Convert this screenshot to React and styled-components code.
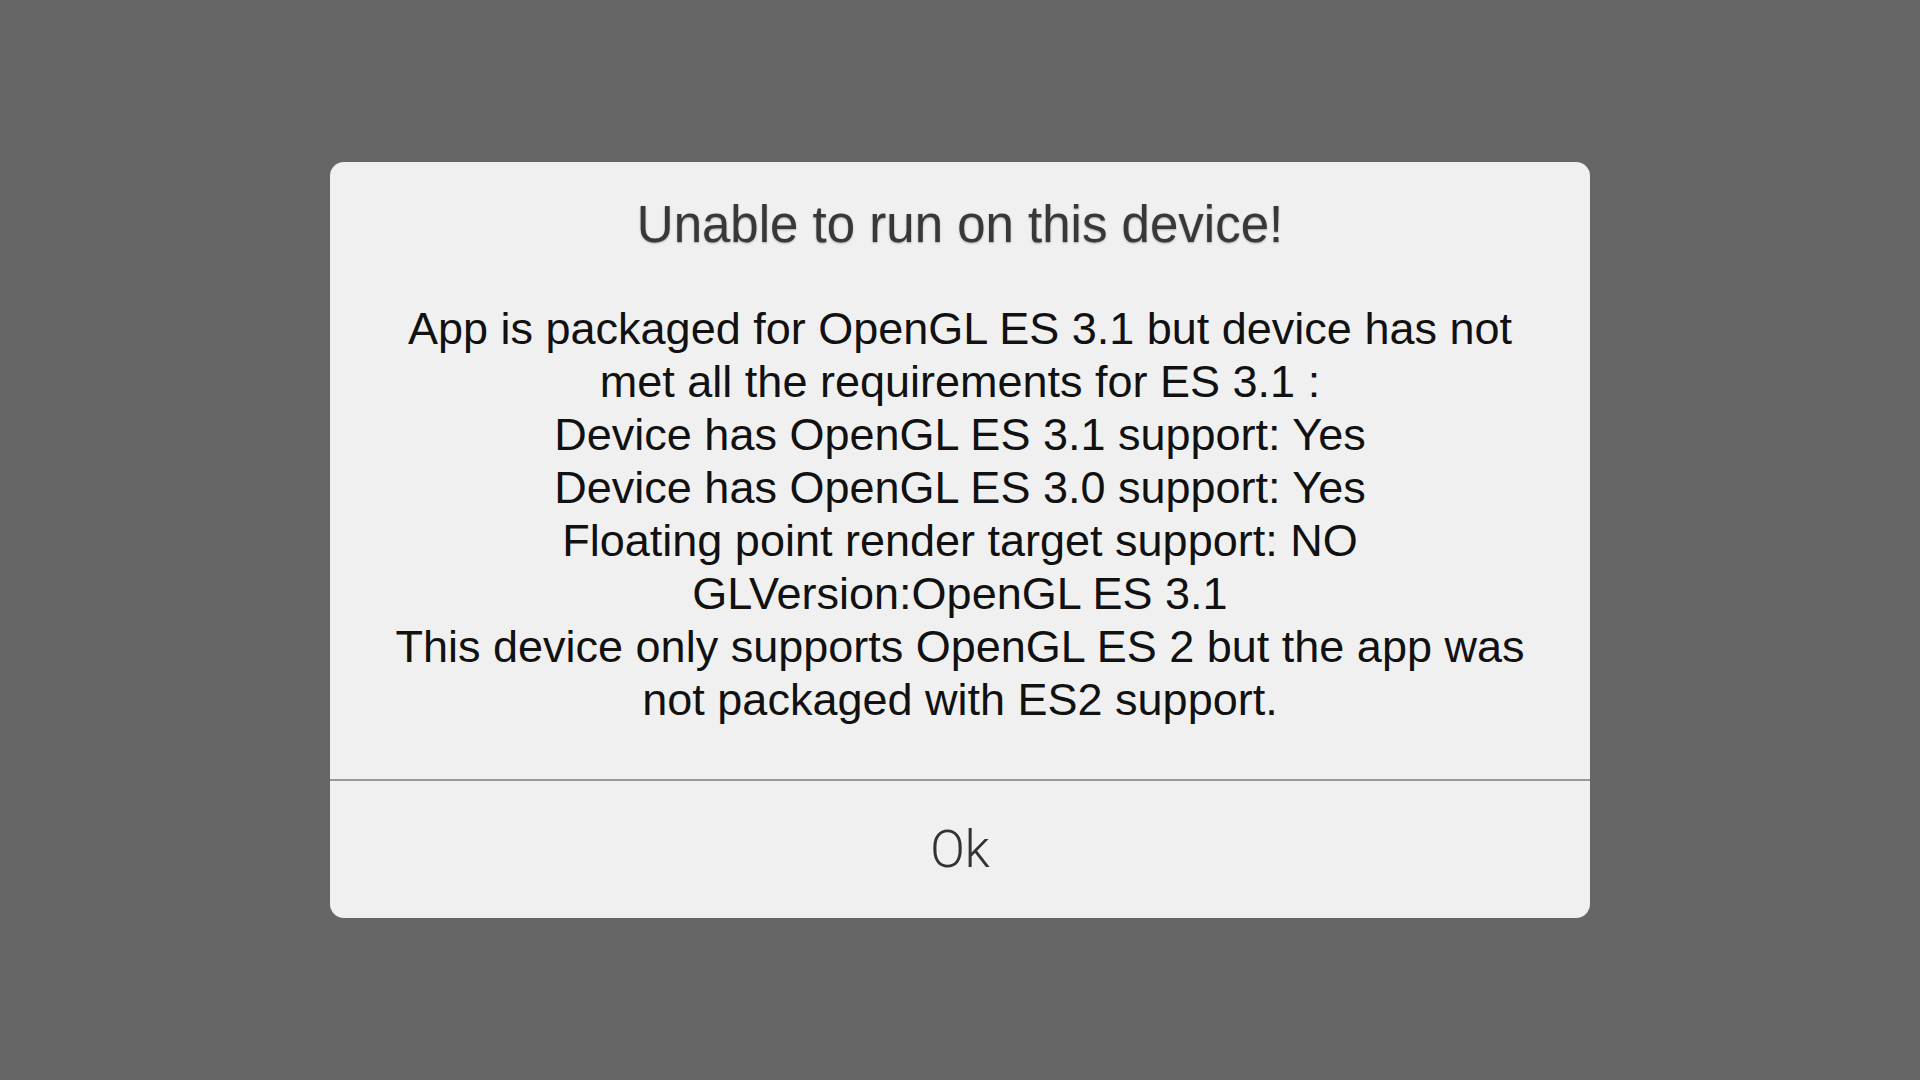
import React from "react";
import styled, { createGlobalStyle } from "styled-components";

const GlobalStyle = createGlobalStyle`
  html, body {
    margin: 0;
    padding: 0;
    height: 100%;
    background: #666666;
  }
  #root {
    height: 100%;
  }
`;

const lines = [
  "App is packaged for OpenGL ES 3.1 but device has not",
  "met all the requirements for ES 3.1 :",
  "Device has OpenGL ES 3.1 support: Yes",
  "Device has OpenGL ES 3.0 support: Yes",
  "Floating point render target support: NO",
  "GLVersion:OpenGL ES 3.1",
  "This device only supports OpenGL ES 2 but the app was",
  "not packaged with ES2 support.",
];

function App() {
  return (
    <>
      <GlobalStyle />
      <Backdrop>
        <Dialog role="dialog">
          <Content>
            <Title>Unable to run on this device!</Title>
            <Message>
              {lines.map((line, i) => (
                <Line key={i}>{line}</Line>
              ))}
            </Message>
          </Content>
          <Divider />
          <OkButton>Ok</OkButton>
        </Dialog>
      </Backdrop>
    </>
  );
}

const Backdrop = styled.div`
  width: 100vw;
  height: 100vh;
  display: flex;
  justify-content: center;
  align-items: center;
  background: #666666;
  font-family: "Liberation Sans", Arial, sans-serif;
`;

const Dialog = styled.div`
  width: 1260px;
  height: 756px;
  background: #f0f0f0;
  border-radius: 14px;
  display: flex;
  flex-direction: column;
  overflow: hidden;
`;

const Content = styled.div`
  padding-top: 33px;
  height: 617px;
  box-sizing: border-box;
  display: flex;
  flex-direction: column;
  align-items: center;
`;

const Title = styled.div`
  font-size: 51px;
  line-height: 60px;
  color: #383838;
  text-shadow: 0 1px 2px rgba(0, 0, 0, 0.3);
  text-align: center;
`;

const Message = styled.div`
  margin-top: 47px;
  display: flex;
  flex-direction: column;
  align-items: center;
`;

const Line = styled.div`
  font-size: 45px;
  line-height: 53px;
  color: #111111;
  text-align: center;
  white-space: nowrap;
`;

const Divider = styled.div`
  height: 2px;
  background: #9a9a9a;
  flex-shrink: 0;
`;

const OkButton = styled.button`
  flex: 1;
  border: none;
  background: transparent;
  font-family: Roboto, "Liberation Sans", sans-serif;
  font-weight: 300;
  font-size: 51px;
  color: #333333;
  padding: 0;
  cursor: pointer;
  display: flex;
  justify-content: center;
  align-items: center;
`;

export default App;
